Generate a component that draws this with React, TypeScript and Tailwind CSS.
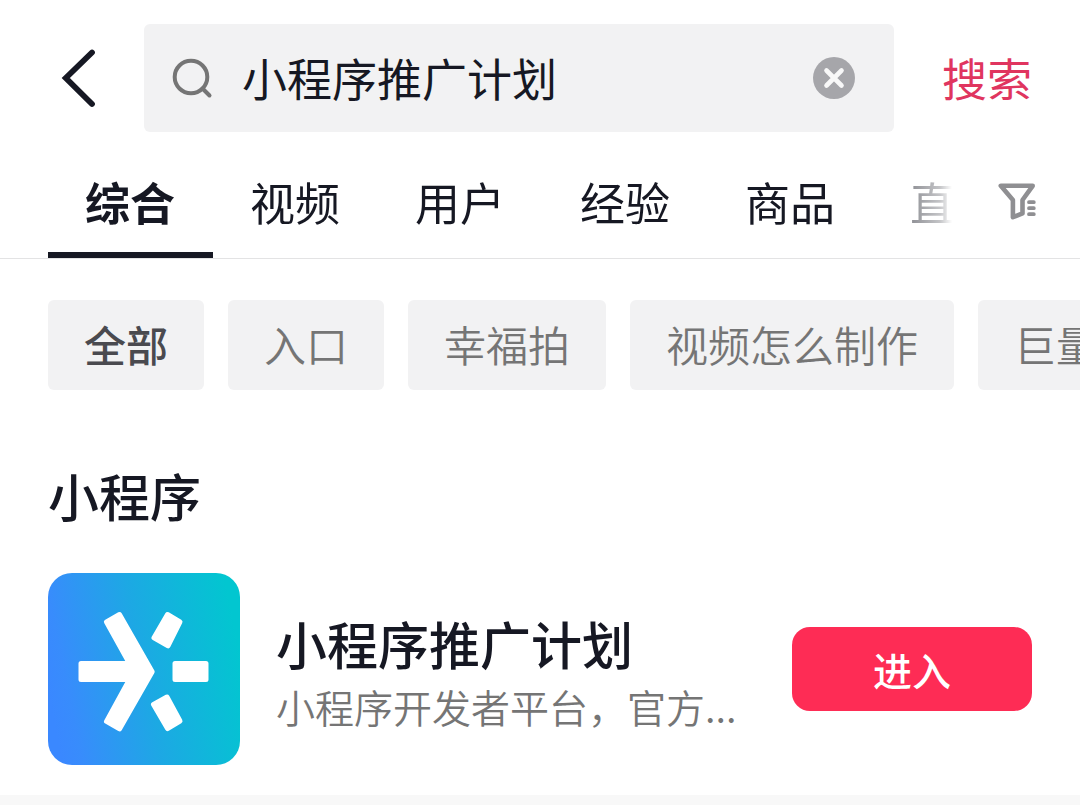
import React, { useState } from 'react';

const TABS = ['综合', '视频', '用户', '经验', '商品', '直'];

const FILTERS = ['全部', '入口', '幸福拍', '视频怎么制作', '巨量'];

function BackIcon() {
  return (
    <svg width="60" height="60" viewBox="0 0 60 60" fill="none" aria-hidden="true">
      <path
        d="M44 4.5 17.8 30 44 56"
        stroke="#161823"
        strokeWidth="5.8"
        strokeLinecap="round"
        strokeLinejoin="miter"
      />
    </svg>
  );
}

function SearchIcon() {
  return (
    <svg width="42" height="42" viewBox="0 0 42 42" fill="none" aria-hidden="true" className="shrink-0">
      <circle cx="20" cy="20" r="16.3" stroke="#757575" strokeWidth="4" />
      <path d="m31.5 31.5 7 7" stroke="#757575" strokeWidth="4" strokeLinecap="round" />
    </svg>
  );
}

function ClearIcon() {
  return (
    <svg width="42" height="42" viewBox="0 0 42 42" fill="none" aria-hidden="true">
      <circle cx="21" cy="21" r="21" fill="#a6a6aa" />
      <path d="m13.5 13.5 15 15m0-15-15 15" stroke="#f8f8f8" strokeWidth="4.6" strokeLinecap="round" />
    </svg>
  );
}

function FilterIcon() {
  return (
    <svg width="42" height="42" viewBox="0 0 42 42" fill="none" stroke="#8f8f92" aria-hidden="true">
      <path d="M4.8 5.8h31.9L26.5 20v13.4l-9.6 3.8V20L4.8 5.8Z" strokeWidth="4.6" strokeLinejoin="round" />
      <path d="M33 22.2h4.8M33 28.2h4.8M33 34.2h4.8" strokeWidth="3.8" strokeLinecap="round" />
    </svg>
  );
}

function ProgramLogo() {
  return (
    <svg width="192" height="192" viewBox="0 0 192 192" aria-hidden="true" className="shrink-0 rounded-3xl">
      <defs>
        <linearGradient id="logo-bg" x1="0" y1="0.62" x2="1" y2="0.42">
          <stop offset="0" stopColor="#3a88ff" />
          <stop offset="0.1" stopColor="#388cfc" />
          <stop offset="0.5" stopColor="#1da8e4" />
          <stop offset="1" stopColor="#02c6d0" />
        </linearGradient>
      </defs>
      <rect width="192" height="192" fill="url(#logo-bg)" />
      <g fill="#fff" stroke="#fff" strokeWidth="5" strokeLinejoin="round">
        <path d="M33 90.5h48.5L58.5 49l13-7.5 32.7 57.2-32.7 57.2-13-7.5 23-41.9H33Z" />
        <path d="M127 90.5h31v16h-31Z" />
        <path d="m119.5 41.5 12.5 7.3-12 24-14-8Z" />
        <path d="m119 124 13 24-12.5 7.5-14-24Z" />
      </g>
    </svg>
  );
}

export default function App() {
  const [query, setQuery] = useState('小程序推广计划');
  const [activeTab, setActiveTab] = useState('综合');
  const [activeFilter, setActiveFilter] = useState('全部');

  return (
    <div className="min-h-screen overflow-hidden bg-white font-['Noto_Sans_CJK_SC',sans-serif] text-[#161823]">
      <form className="flex items-center px-12 pt-6" onSubmit={(e) => e.preventDefault()}>
        <button type="button" aria-label="返回" className="mr-9 shrink-0">
          <BackIcon />
        </button>
        <div className="flex h-[108px] min-w-0 flex-1 items-center rounded-md bg-[#f2f2f3] pr-[39px] pl-[27px]">
          <SearchIcon />
          <input
            type="text"
            aria-label="搜索"
            value={query}
            onChange={(e) => setQuery(e.target.value)}
            className="ml-[29px] h-16 min-w-0 flex-1 bg-transparent text-[45px] outline-none"
          />
          <button type="button" aria-label="清除" onClick={() => setQuery('')} className="shrink-0">
            <ClearIcon />
          </button>
        </div>
        <button type="submit" className="ml-12 shrink-0 text-[45px] leading-[60px] text-[#e0355f]">
          搜索
        </button>
      </form>

      <div className="mt-5 flex items-center border-b border-[#e3e3e4] pr-[42px] pl-12">
        <nav className="flex min-w-0 flex-1 overflow-hidden [mask-image:linear-gradient(to_right,black_calc(100%-84px),rgb(0_0_0/0.5)_calc(100%-48px),rgb(0_0_0/0.25)_calc(100%-16px),transparent_calc(100%-4px))]">
          {TABS.map((tab) => (
            <button
              key={tab}
              type="button"
              onClick={() => setActiveTab(tab)}
              className={`h-[106px] w-[165px] shrink-0 border-b-[6px] pl-[37px] text-left text-[45px] whitespace-nowrap ${
                tab === activeTab ? 'border-[#161823] font-bold' : 'border-transparent'
              }`}
            >
              {tab}
            </button>
          ))}
        </nav>
        <button type="button" aria-label="筛选" className="mb-2 ml-10 shrink-0">
          <FilterIcon />
        </button>
      </div>

      <div className="mt-[41px] flex gap-6 overflow-hidden pl-12">
        {FILTERS.map((filter) => (
          <button
            key={filter}
            type="button"
            onClick={() => setActiveFilter(filter)}
            className={`h-[90px] shrink-0 rounded-md bg-[#f2f2f3] px-9 pb-1 text-[42px] whitespace-nowrap ${
              filter === activeFilter ? 'font-medium text-[#4a4a4f]' : 'font-[350] text-[#757575]'
            }`}
          >
            {filter}
          </button>
        ))}
      </div>

      <section className="px-12 pt-[75px] pb-[30px]">
        <h2 className="text-[51px] leading-[60px] font-medium">小程序</h2>
        <div className="mt-12 flex items-center">
          <ProgramLogo />
          <div className="ml-9 min-w-0 flex-1 pt-2">
            <h3 className="text-[51px] leading-[66px] font-medium">小程序推广计划</h3>
            <p className="text-[39px] leading-[60px] font-[350] text-[#757575]">小程序开发者平台，官方...</p>
          </div>
          <button
            type="button"
            className="h-[84px] w-60 shrink-0 rounded-[18px] bg-[#fe2c55] text-[39px] font-medium text-white"
          >
            进入
          </button>
        </div>
      </section>
      <div className="h-3 bg-[#f8f8f8]" />
    </div>
  );
}
